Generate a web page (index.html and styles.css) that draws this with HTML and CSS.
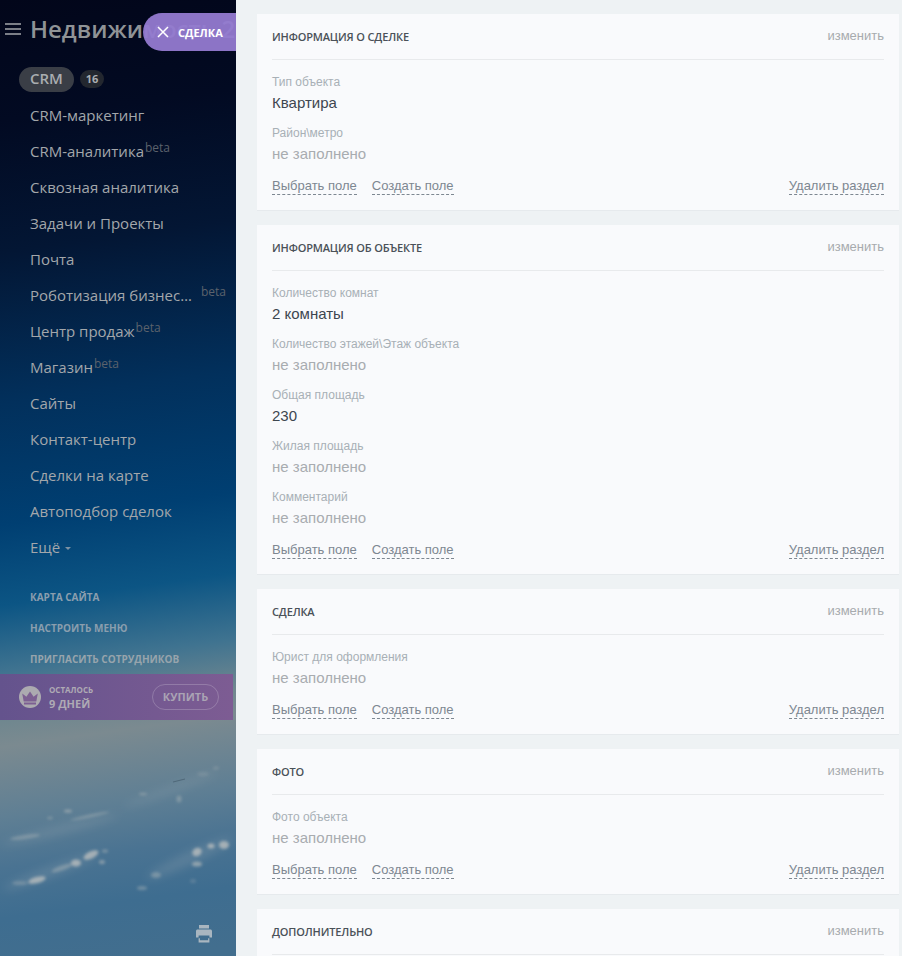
FILE: index.html
```html
<!DOCTYPE html>
<html lang="ru">
<head>
<meta charset="utf-8">
<title>Сделка</title>
<link rel="stylesheet" href="styles.css">
</head>
<body>
<aside class="sidebar">
  <svg class="clouds" viewBox="0 0 236 956" width="236" height="956" aria-hidden="true">
    <defs>
      <filter id="b1" x="-50%" y="-200%" width="200%" height="500%"><feGaussianBlur stdDeviation="1.6"/></filter>
      <filter id="b2" x="-30%" y="-100%" width="160%" height="300%"><feGaussianBlur stdDeviation="5"/></filter>
    </defs>
    <g filter="url(#b2)" fill="#a9b3ba" opacity=".22">
      <ellipse cx="60" cy="830" rx="60" ry="4" transform="rotate(-14 60 830)"/>
      <ellipse cx="170" cy="790" rx="50" ry="3" transform="rotate(-20 170 790)"/>
      <ellipse cx="50" cy="872" rx="50" ry="5" transform="rotate(-20 50 872)"/>
      <ellipse cx="190" cy="858" rx="48" ry="6" transform="rotate(-25 190 858)"/>
    </g>
    <g filter="url(#b1)" fill="#c4c5c2" opacity=".72">
      <ellipse cx="37" cy="880" rx="9" ry="3" transform="rotate(-15 37 880)"/>
      <ellipse cx="20" cy="883" rx="8" ry="2" opacity=".4"/>
      <ellipse cx="62" cy="868" rx="11" ry="2.5" transform="rotate(-20 62 868)" opacity=".5"/>
      <ellipse cx="76" cy="863" rx="5" ry="3.5"/>
      <ellipse cx="91" cy="855" rx="8" ry="3.5" transform="rotate(-25 91 855)"/>
      <ellipse cx="102" cy="862" rx="3" ry="2" opacity=".7"/>
      <ellipse cx="105" cy="851" rx="3" ry="1.5" opacity=".6"/>
      <ellipse cx="197" cy="852" rx="5" ry="4" transform="rotate(-35 197 852)"/>
      <ellipse cx="211" cy="846" rx="3.5" ry="2.5"/>
      <ellipse cx="224" cy="845" rx="5" ry="4"/>
      <ellipse cx="197" cy="864" rx="5" ry="2.5" opacity=".8"/>
      <ellipse cx="156" cy="875" rx="5" ry="3" opacity=".5"/>
      <ellipse cx="142" cy="888" rx="5" ry="2" opacity=".5"/>
      <ellipse cx="193" cy="881" rx="3" ry="2" opacity=".3"/>
      <ellipse cx="68" cy="811" rx="4" ry="1.5" opacity=".7"/>
      <ellipse cx="50" cy="818" rx="3" ry="1.2" opacity=".5"/>
      <ellipse cx="25" cy="837" rx="15" ry="2" transform="rotate(-8 25 837)" opacity=".45"/>
      <ellipse cx="90" cy="816" rx="20" ry="1.5" transform="rotate(-12 90 816)" opacity=".45"/>
      <ellipse cx="143" cy="794" rx="4" ry="1.2" opacity=".5"/>
      <ellipse cx="179" cy="799" rx="2.5" ry="3.5" opacity=".5"/>
      <ellipse cx="203" cy="774" rx="6" ry="2" opacity=".25"/>
      <ellipse cx="216" cy="768" rx="3" ry="1.5" opacity=".35"/>
    </g>
    <path d="M173 782l12-3" stroke="#3f5666" stroke-width="1" opacity=".6"/>
  </svg>

  <header class="brand">
    <svg class="burger" viewBox="0 0 16 12" width="16" height="12" aria-hidden="true"><path d="M0 1h16M0 6h16M0 11h16" stroke="#a4a7aa" stroke-width="1.6"/></svg>
    <span class="brand-name">Недвижимость 2</span>
  </header>
  <div class="deal-pill">
    <svg viewBox="0 0 12 12" width="12" height="12" aria-hidden="true"><path d="M1 1l10 10M11 1L1 11" stroke="#fff" stroke-width="1.5"/></svg>
    <span>Сделка</span>
  </div>

  <nav class="menu">
    <div class="item item-active"><span class="crm-pill">CRM</span><span class="counter">16</span></div>
    <div class="item">CRM-маркетинг</div>
    <div class="item">CRM-аналитика<sup class="beta">beta</sup></div>
    <div class="item">Сквозная аналитика</div>
    <div class="item">Задачи и Проекты</div>
    <div class="item">Почта</div>
    <div class="item"><span class="clip">Роботизация бизнес-процессов</span><sup class="beta beta-far">beta</sup></div>
    <div class="item">Центр продаж<sup class="beta">beta</sup></div>
    <div class="item">Магазин<sup class="beta">beta</sup></div>
    <div class="item">Сайты</div>
    <div class="item">Контакт-центр</div>
    <div class="item">Сделки на карте</div>
    <div class="item">Автоподбор сделок</div>
    <div class="item">Ещё<i class="caret"></i></div>
  </nav>

  <div class="links">
    <div class="link">Карта сайта</div>
    <div class="link">Настроить меню</div>
    <div class="link">Пригласить сотрудников</div>
  </div>

  <div class="trial">
    <span class="crown">
      <svg viewBox="0 0 22 22" width="22" height="22" aria-hidden="true"><path d="M3.2 7.6l4.2 3.2L11 5.6l3.6 5.2 4.2-3.2-1.5 8H4.7zM5 16.6h12v1.8H5z" fill="#7c5f92"/></svg>
    </span>
    <div class="trial-text">
      <div class="trial-small">Осталось</div>
      <div class="trial-big">9 дней</div>
    </div>
    <span class="buy">Купить</span>
  </div>

  <svg class="printer" viewBox="0 0 16 18" width="16" height="18" aria-hidden="true">
    <path d="M3 0h10v3.4H3zM1.6 4.6h12.8c.9 0 1.6.7 1.6 1.6v6.4h-2.6v-2.2H2.600v2.200H0V6.200c0-.9.7-1.600 1.600-1.600z" fill="#a9b6c0"/>
    <path d="M2.600 13.200h1.300v2.100h8.200v-2.100h1.300v4.200H2.600z" fill="#a9b6c0"/>
  </svg>
</aside>

<main class="content">
  <section class="card">
    <div class="card-head"><h2>Информация о сделке</h2><span class="edit">изменить</span></div>
    <div class="field"><div class="label">Тип объекта</div><div class="value">Квартира</div></div>
    <div class="field"><div class="label">Район\метро</div><div class="value empty">не заполнено</div></div>
    <div class="actions"><a class="dash">Выбрать поле</a><a class="dash">Создать поле</a><a class="dash del">Удалить раздел</a></div>
  </section>

  <section class="card">
    <div class="card-head"><h2>Информация об объекте</h2><span class="edit">изменить</span></div>
    <div class="field"><div class="label">Количество комнат</div><div class="value">2 комнаты</div></div>
    <div class="field"><div class="label">Количество этажей\Этаж объекта</div><div class="value empty">не заполнено</div></div>
    <div class="field"><div class="label">Общая площадь</div><div class="value">230</div></div>
    <div class="field"><div class="label">Жилая площадь</div><div class="value empty">не заполнено</div></div>
    <div class="field"><div class="label">Комментарий</div><div class="value empty">не заполнено</div></div>
    <div class="actions"><a class="dash">Выбрать поле</a><a class="dash">Создать поле</a><a class="dash del">Удалить раздел</a></div>
  </section>

  <section class="card">
    <div class="card-head"><h2>Сделка</h2><span class="edit">изменить</span></div>
    <div class="field"><div class="label">Юрист для оформления</div><div class="value empty">не заполнено</div></div>
    <div class="actions"><a class="dash">Выбрать поле</a><a class="dash">Создать поле</a><a class="dash del">Удалить раздел</a></div>
  </section>

  <section class="card">
    <div class="card-head"><h2>Фото</h2><span class="edit">изменить</span></div>
    <div class="field"><div class="label">Фото объекта</div><div class="value empty">не заполнено</div></div>
    <div class="actions"><a class="dash">Выбрать поле</a><a class="dash">Создать поле</a><a class="dash del">Удалить раздел</a></div>
  </section>

  <section class="card">
    <div class="card-head"><h2>Дополнительно</h2><span class="edit">изменить</span></div>
  </section>
</main>
</body>
</html>
```

FILE: styles.css
```css
* { box-sizing: border-box; }
html, body { margin: 0; height: 100%; overflow: hidden; }
body {
  display: flex;
  background: #eef2f4;
  font-family: "Liberation Sans", Arial, sans-serif;
}

/* Sidebar */
.sidebar {
  position: relative;
  flex: 0 0 236px;
  width: 236px;
  height: 956px;
  overflow: hidden;
  display: flex;
  flex-direction: column;
  font-family: "Open Sans", sans-serif;
  color: #a3a7ab;
  background: linear-gradient(172deg,
    #02061a 0, #020a22 120px, #031634 250px, #02305c 400px, #003f72 520px,
    #0c5584 600px, #3f7390 665px, #70878f 715px, #7b8a90 740px, #5f7f94 810px,
    #4a7392 860px, #3e6d90 910px, #426e8e 970px);
}
.clouds { position: absolute; left: 0; top: 0; }
.brand {
  position: relative;
  display: flex;
  align-items: center;
  height: 61px;
  padding: 0 0 4px 5px;
  white-space: nowrap;
}
.burger { flex: none; margin-right: 9px; }
.brand-name { font-size: 24px; font-weight: 600; color: #8f9396; }
.deal-pill {
  position: absolute;
  left: 143px;
  top: 13px;
  width: 93px;
  height: 38px;
  display: flex;
  align-items: center;
  gap: 9px;
  padding-left: 14px;
  border-radius: 19px 0 0 19px;
  background: rgba(147, 122, 208, .95);
  color: #fff;
  font-size: 11px;
  font-weight: 700;
  text-transform: uppercase;
}

.menu { position: relative; display: flex; flex-direction: column; }
.item {
  display: flex;
  align-items: center;
  height: 36px;
  padding-left: 30px;
  font-size: 15px;
  white-space: nowrap;
}
.item-active { padding-left: 19px; }
.crm-pill {
  display: block;
  width: 55px;
  height: 25px;
  line-height: 23px;
  text-align: center;
  border-radius: 13px;
  background: #3a3e46;
  color: #a9adb0;
  font-weight: 600;
}
.counter {
  width: 24px;
  height: 18px;
  margin-left: 6px;
  line-height: 18px;
  text-align: center;
  border-radius: 9px;
  background: #23272f;
  color: #a9adb0;
  font-size: 11px;
  font-weight: 700;
}
.beta {
  align-self: flex-start;
  margin: 7px 0 0 1px;
  font-size: 12px;
  line-height: 16px;
  color: #5c626c;
}
.clip { display: block; width: 163px; overflow: hidden; text-overflow: ellipsis; }
.beta-far { margin-left: 8px; }
.caret {
  display: block;
  margin: 2px 0 0 5px;
  border: 3px solid transparent;
  border-top-color: #7d92a4;
  border-bottom-width: 0;
}

.links { position: relative; display: flex; flex-direction: column; margin-top: 17px; }
.link {
  height: 31px;
  line-height: 31px;
  padding-left: 30px;
  font-size: 10px;
  font-weight: 700;
  text-transform: uppercase;
  color: #8a9eae;
  white-space: nowrap;
}
.links .link:nth-child(3) { color: #97a4ac; }

.trial {
  position: relative;
  display: flex;
  align-items: center;
  width: 233px;
  height: 46px;
  margin-top: -1px;
  padding-left: 19px;
  background: linear-gradient(90deg, #64538d, #7d5c93);
}
.crown {
  display: flex;
  align-items: center;
  justify-content: center;
  width: 22px;
  height: 22px;
  border-radius: 50%;
  background: #acaab0;
}
.trial-text { margin-left: 8px; width: 103px; text-transform: uppercase; color: #aeaab4; font-weight: 700; }
.trial-small { font-size: 8px; line-height: 13px; }
.trial-big { font-size: 11px; line-height: 15px; }
.buy {
  width: 67px;
  height: 26px;
  line-height: 24px;
  text-align: center;
  border: 1px solid rgba(255, 255, 255, .2);
  border-radius: 13px;
  color: #aaa3b4;
  font-size: 11px;
  font-weight: 700;
  text-transform: uppercase;
}
.printer {
  position: relative;
  flex: none;
  margin: auto 24px 13px auto;
}

/* Content */
.content {
  flex: 1;
  min-width: 0;
  padding: 14px 3px 0 21px;
  display: flex;
  flex-direction: column;
  gap: 15px;
}
.card {
  flex: none;
  padding: 0 15px;
  background: #f9fafc;
  box-shadow: 0 1px 0 #e6eaed;
}
.card-head {
  display: flex;
  align-items: center;
  justify-content: space-between;
  height: 46px;
  border-bottom: 1px solid #e8eaec;
  margin-bottom: 12px;
}
.card-head h2 {
  margin: 0;
  font: 600 11px/1 "Open Sans", sans-serif;
  letter-spacing: -.15px;
  text-transform: uppercase;
  color: #4a5158;
}
.edit { font-size: 13px; color: #a7abae; margin-top: -2px; }
.field { height: 51px; padding-top: 2px; }
.label { font-size: 12px; line-height: 16px; color: #a8b0b6; }
.value { margin-top: 3px; font-size: 15px; line-height: 20px; color: #3d4650; }
.value.empty { color: #a8acb0; }
.actions {
  display: flex;
  gap: 15px;
  height: 36px;
  padding-top: 4px;
}
.dash {
  align-self: flex-start;
  font-size: 13px;
  line-height: 16px;
  color: #7d8791;
  border-bottom: 1px dashed #7d8791;
}
.del { margin-left: auto; }
```
